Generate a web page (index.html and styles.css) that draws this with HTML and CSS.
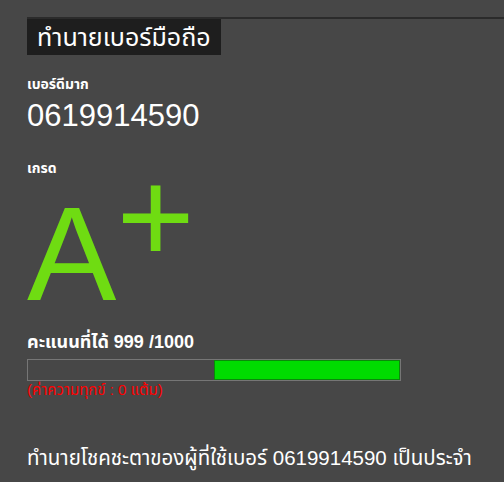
FILE: index.html
```html
<!DOCTYPE html>
<html lang="th">
  <head>
    <meta charset="UTF-8" />
    <meta name="viewport" content="width=device-width, initial-scale=1.0" />
    <title>ทำนายเบอร์มือถือ</title>
    <link rel="stylesheet" href="styles.css">
  </head>

  <body>
    <div class="panel">
      <h2 class="panel-title">ทำนายเบอร์มือถือ</h2>

      <!-- Number -->
      <div class="label">เบอร์ดีมาก</div>
      <div class="phone">0619914590</div>

      <!-- Grade -->
      <div class="label grade-label">เกรด</div>
      <div class="grade">A<span class="grade-plus">+</span></div>

      <!-- Score -->
      <div class="score">คะแนนที่ได้ 999 /1000</div>
      <div class="bar">
        <div class="bar-fill" style="width: 49.9%"></div>
      </div>
      <div class="pain">(ค่าความทุกข์ : 0 แต้ม)</div>

      <p class="summary">ทำนายโชคชะตาของผู้ที่ใช้เบอร์ 0619914590 เป็นประจำ</p>
    </div>
  </body>
</html>
```

FILE: styles.css
```css
body {
  margin: 0;
  padding: 0;
  background-color: #474747;
  color: #fff;
  font-family: "Liberation Sans", "Noto Sans Thai", Arial, sans-serif;
}

.panel {
  margin: 17px 0 0 27px;
  border-top: 2px solid #2b2b2b;
}

.panel-title {
  display: inline-block;
  margin: 0;
  padding: 0 10px;
  height: 36px;
  line-height: 36px;
  background: #1e1e1e;
  font-size: 25px;
  font-weight: normal;
}

.label {
  margin-top: 20px;
  font-size: 14px;
  line-height: 18px;
  font-weight: bold;
}

.phone {
  margin-top: 6px;
  font-size: 31px;
  line-height: 34px;
}

.grade-label {
  margin-top: 26px;
}

.grade {
  margin-top: 2px;
  color: #6fdc12;
  font-size: 134px;
  line-height: 150px;
  height: 150px;
}

.grade-plus {
  vertical-align: 37px;
  line-height: 0;
}

.score {
  margin-top: 2px;
  font-size: 18px;
  line-height: 22px;
  font-weight: bold;
}

.bar {
  display: flex;
  justify-content: flex-end;
  margin-top: 6px;
  width: 374px;
  height: 22px;
  box-sizing: border-box;
  border: 1px solid #767676;
}

.bar-fill {
  background: #00dc00;
  border: 1px solid #0a8a0a;
  box-sizing: border-box;
}

.pain {
  color: #ff0000;
  font-size: 15px;
  line-height: 18px;
}

.summary {
  margin: 46px 0 0;
  font-size: 20.5px;
  line-height: 26px;
}
```
